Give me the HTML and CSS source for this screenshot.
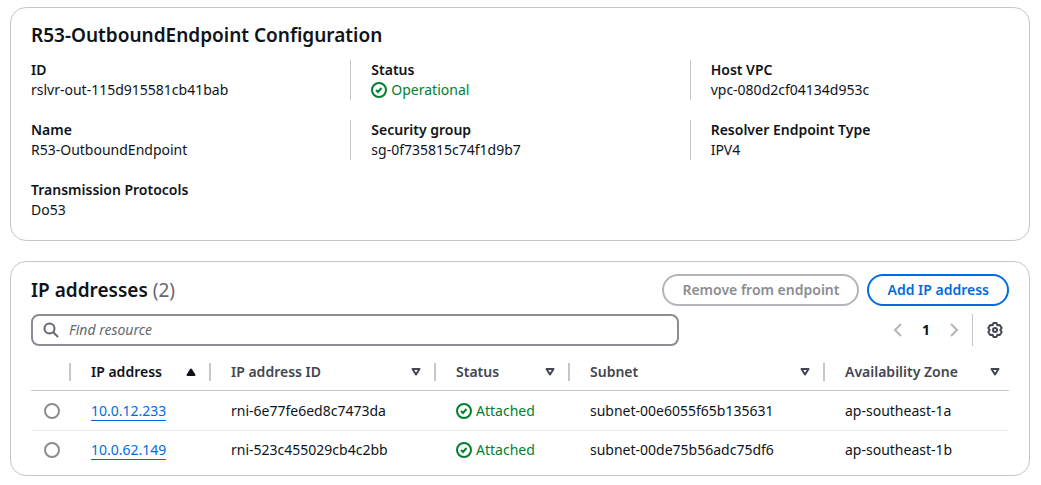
FILE: index.html
```html
<!DOCTYPE html>
<html lang="en">
<head>
<meta charset="utf-8">
<title>R53-OutboundEndpoint</title>
<link rel="stylesheet" href="styles.css">
</head>
<body>
<svg class="sprite" aria-hidden="true">
  <symbol id="check" viewBox="0 0 16 16"><circle cx="8" cy="8" r="7"/><path d="m5 8 2 2 3.500-4"/></symbol>
  <symbol id="sort" viewBox="0 0 16 16"><path d="M4.500 5h7L8 10.500z"/></symbol>
</svg>
<main class="page">
  <section class="card">
    <h2 class="title config-title">R53-OutboundEndpoint Configuration</h2>
    <dl class="details">
      <div class="pair"><dt>ID</dt><dd>rslvr-out-115d915581cb41bab</dd></div>
      <div class="pair"><dt>Status</dt><dd class="status"><svg class="icon"><use href="#check"/></svg>Operational</dd></div>
      <div class="pair"><dt>Host VPC</dt><dd>vpc-080d2cf04134d953c</dd></div>
      <div class="pair"><dt>Name</dt><dd>R53-OutboundEndpoint</dd></div>
      <div class="pair"><dt>Security group</dt><dd>sg-0f735815c74f1d9b7</dd></div>
      <div class="pair"><dt>Resolver Endpoint Type</dt><dd>IPV4</dd></div>
      <div class="pair"><dt>Transmission Protocols</dt><dd>Do53</dd></div>
    </dl>
  </section>

  <section class="card addresses">
    <header class="bar">
      <h2 class="title">IP addresses <span class="count">(2)</span></h2>
      <div class="actions">
        <button class="button" type="button" disabled>Remove from endpoint</button>
        <button class="button primary" type="button">Add IP address</button>
      </div>
    </header>
    <div class="tools">
      <label class="search">
        <svg class="icon" aria-hidden="true"><circle cx="6.500" cy="6.500" r="5"/><path d="m10.500 10.500 4.500 4.500"/></svg>
        <input class="search-input" type="search" placeholder="Find resource" aria-label="Find resource">
      </label>
      <div class="paging">
        <button class="icon-button" type="button" aria-label="Previous page" disabled><svg class="icon"><path d="m11 2-6 6 6 6"/></svg></button>
        <button class="page-number" type="button">1</button>
        <button class="icon-button" type="button" aria-label="Next page" disabled><svg class="icon"><path d="m5 2 6 6-6 6"/></svg></button>
        <span class="divider"></span>
        <button class="icon-button" type="button" aria-label="Preferences"><svg class="icon gear"><path d="M6.500 1h3l.8 2.200 2.500-.2 1.900 3L13.300 8l1.400 2-1.900 3-2.500-.2L9.500 15h-3l-.8-2.200-2.500.2-1.900-3L2.700 8 1.300 6l1.900-3 2.500.2z"/><circle cx="8" cy="8" r="2"/></svg></button>
      </div>
    </div>
    <table class="table">
      <colgroup><col class="col-pick"><col class="col-ip"><col class="col-id"><col class="col-status"><col><col class="col-zone"></colgroup>
      <thead>
        <tr>
          <th class="pick" aria-label="Select"></th>
          <th class="sorted" aria-sort="ascending"><div class="head">IP address<svg class="icon" viewBox="0 0 16 16"><path d="M4.500 11h7L8 5.500z"/></svg></div></th>
          <th><div class="head">IP address ID<svg class="icon"><use href="#sort"/></svg></div></th>
          <th><div class="head">Status<svg class="icon"><use href="#sort"/></svg></div></th>
          <th><div class="head">Subnet<svg class="icon"><use href="#sort"/></svg></div></th>
          <th><div class="head">Availability Zone<svg class="icon"><use href="#sort"/></svg></div></th>
        </tr>
      </thead>
      <tbody>
        <tr>
          <td class="pick"><input class="radio" type="radio" name="address" aria-label="Select 10.0.12.233"></td>
          <td><a class="link" href="#">10.0.12.233</a></td>
          <td>rni-6e77fe6ed8c7473da</td>
          <td><div class="status"><svg class="icon"><use href="#check"/></svg>Attached</div></td>
          <td>subnet-00e6055f65b135631</td>
          <td>ap-southeast-1a</td>
        </tr>
        <tr>
          <td class="pick"><input class="radio" type="radio" name="address" aria-label="Select 10.0.62.149"></td>
          <td><a class="link" href="#">10.0.62.149</a></td>
          <td>rni-523c455029cb4c2bb</td>
          <td><div class="status"><svg class="icon"><use href="#check"/></svg>Attached</div></td>
          <td>subnet-00de75b56adc75df6</td>
          <td>ap-southeast-1b</td>
        </tr>
      </tbody>
    </table>
  </section>
</main>
</body>
</html>
```
FILE: styles.css
```css
* { box-sizing: border-box; }
body {
  margin: 0;
  background: #fff;
  color: #0f141a;
  font: 14px/20px "Noto Sans", "Open Sans", sans-serif;
}
.sprite { display: none; }
.page {
  display: flex;
  flex-direction: column;
  gap: 20px;
  padding: 7px 11px 9px 10px;
}
.card {
  border: 1px solid #c6c6cd;
  border-radius: 16px;
}
.title {
  margin: 0;
  font-size: 19px;
  line-height: 24px;
  font-weight: 600;
}
.config-title { padding: 15px 20px 0; }
.icon {
  flex: none;
  width: 16px;
  height: 16px;
  fill: none;
  stroke: currentColor;
  stroke-width: 2;
}
.details {
  display: grid;
  grid-template-columns: repeat(3, 1fr);
  row-gap: 20px;
  margin: 0;
  padding: 13px 0 20px;
}
.pair { padding: 0 20px; border-left: 1px solid #c6c6cd; }
.pair:nth-child(3n + 1) { border-left: 0; }
.pair dt { font-weight: 600; }
.pair dd { margin: 0; }
.status, .pair .status {
  display: flex;
  align-items: center;
  gap: 4px;
  color: #00802f;
}
.addresses { padding: 12px 20px 6px; }
.bar, .tools {
  display: flex;
  align-items: center;
  justify-content: space-between;
}
.count { color: #656871; font-weight: 400; }
.actions { display: flex; gap: 8px; }
.button {
  height: 32px;
  padding: 0 18px;
  border: 2px solid #b4b4bb;
  border-radius: 16px;
  background: #fff;
  color: #8c8c94;
  font: inherit;
  font-weight: 600;
}
.primary { border-color: #006ce0; color: #006ce0; }
.tools { margin-top: 8px; }
.search {
  display: flex;
  align-items: center;
  gap: 10px;
  flex: 0 1 648px;
  height: 32px;
  padding: 0 10px;
  border: 2px solid #8c8c94;
  border-radius: 8px;
  color: #656871;
}
.search-input {
  flex: 1;
  min-width: 0;
  padding: 0;
  border: 0;
  outline: 0;
  background: none;
  font: inherit;
}
.search-input::placeholder { color: #656871; font-style: italic; }
.paging { display: flex; align-items: center; gap: 8px; }
.icon-button, .page-number {
  display: flex;
  align-items: center;
  justify-content: center;
  padding: 0;
  border: 0;
  background: none;
  color: #424650;
}
.icon-button { width: 16px; height: 32px; }
.icon-button:disabled { color: #b4b4bb; }
.icon-button:last-child { width: 28px; }
.gear { stroke-linejoin: round; }
.page-number {
  width: 24px;
  color: #0f141a;
  font: inherit;
  font-weight: 700;
}
.divider { width: 1px; height: 32px; margin-left: 2px; background: #c6c6cd; }
.table {
  width: 100%;
  table-layout: fixed;
  border-collapse: separate;
  border-spacing: 0;
  margin-top: 6px;
}
.col-pick { width: 38px; }
.col-ip { width: 140px; }
.col-id { width: 225px; }
.col-status { width: 134px; }
.col-zone { width: 186px; }
.table th, .table td {
  height: 39px;
  padding: 0 0 0 22px;
  text-align: left;
  white-space: nowrap;
}
.table th {
  padding-top: 2px;
  border-bottom: 1px solid #c6c6cd;
  color: #424650;
  font-weight: 600;
}
.table tbody tr:first-child td { height: 40px; border-bottom: 1px solid #ebebf0; }
.table tbody tr:last-child td { height: 38px; }
.table .sorted { color: #0f141a; }
.sorted .icon { fill: currentColor; }
.head {
  display: flex;
  align-items: center;
  justify-content: space-between;
  padding-right: 10px;
}
.head .icon { stroke-linejoin: round; }
.table th:last-child .head { padding-right: 6px; }
.table th:not(.pick) {
  background: linear-gradient(#c6c6cd, #c6c6cd) 0 11px / 2px 18px no-repeat;
}
.table .pick { padding: 0 0 0 13px; }
.radio {
  display: block;
  appearance: none;
  width: 16px;
  height: 16px;
  margin: 0;
  border: 2px solid #8c8c94;
  border-radius: 50%;
}
.radio:checked { border: 5px solid #006ce0; }
.link {
  border-bottom: 1px solid currentColor;
  color: #006ce0;
  text-decoration: none;
}
```
